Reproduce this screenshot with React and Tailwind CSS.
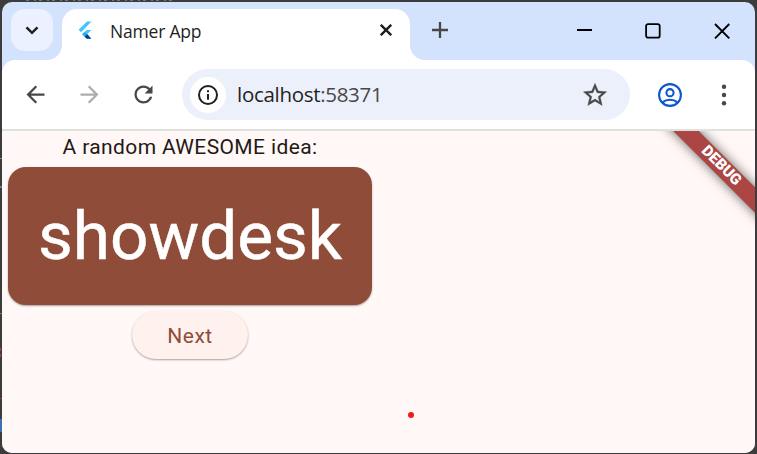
import React from "react";

const UI_FONT = "font-['Open_Sans','Noto_Sans',sans-serif]";

function ArrowIcon({ className }) {
  return (
    <svg viewBox="0 0 24 24" className={`h-[27px] w-[27px] shrink-0 ${className}`} fill="currentColor">
      <path d="M20 11H7.83l5.59-5.59L12 4l-8 8 8 8 1.41-1.41L7.83 13H20v-2z" />
    </svg>
  );
}

function FlutterLogo() {
  return (
    <svg viewBox="0 0 14 19" className="ml-[16px] h-[19px] w-[14px] shrink-0">
      <path d="M9 .5H13.5L3 11.2.6 8.8Z" fill="#41c4fb" />
      <path d="M8.7 9H13.2L9.3 13 13.2 17.8H8.8L4.2 13.3Z" fill="#41c4fb" />
      <path d="M6.5 15.4 9 13 13.3 17.8H8.9Z" fill="#063a94" />
      <path d="M4.3 13.3 6.6 11 9 13.2 6.6 15.5Z" fill="#1eaaf0" />
    </svg>
  );
}

function TabStrip() {
  return (
    <div className="flex h-[58px] shrink-0 items-start pl-[9px]">
      <div className="mt-[7px] flex h-[42px] w-[42px] shrink-0 items-center justify-center rounded-[14px] bg-[#ebf1fe]">
        <svg viewBox="0 0 14 9" className="h-[9px] w-[14px]" fill="none" stroke="#1f1f1f" strokeWidth="2.5">
          <path d="M1.5 1.3 7 6.8 12.5 1.3" />
        </svg>
      </div>
      <svg viewBox="0 0 15 15" className="-ml-[6px] h-[15px] w-[15px] shrink-0 self-end" fill="#fff">
        <path d="M15 0V15H0C8.3 15 15 8.3 15 0Z" />
      </svg>
      <div className="mt-[7px] flex h-[51px] w-[348px] shrink-0 items-start rounded-t-[15px] bg-white">
        <div className="flex h-[43px] w-full items-center">
          <FlutterLogo />
          <span className={`ml-[18px] whitespace-nowrap text-[17.5px] leading-[24px] tracking-[-0.2px] text-[#1f1f1f] ${UI_FONT}`}>Namer App</span>
          <svg viewBox="0 0 12 12" className="relative -top-px mr-[18px] ml-auto h-[12px] w-[12px]" stroke="#1f1f1f" strokeWidth="2.4">
            <path d="M.8.8 11.2 11.2M11.2.8.8 11.2" />
          </svg>
        </div>
      </div>
      <svg viewBox="0 0 15 15" className="h-[15px] w-[15px] shrink-0 self-end" fill="#fff">
        <path d="M0 0V15H15C6.7 15 0 8.3 0 0Z" />
      </svg>
      <svg viewBox="0 0 16 16" className="mt-[20px] ml-[7px] h-[16px] w-[16px] shrink-0" stroke="#474747" strokeWidth="2.3">
        <path d="M8 0V16M0 8H16" />
      </svg>
      <svg viewBox="0 0 15 2" className="mt-[27px] ml-[129px] h-[2px] w-[15px] shrink-0" fill="#000">
        <path d="M0 0H15V2H0Z" />
      </svg>
      <svg viewBox="0 0 16 16" className="mt-[21px] ml-[53px] h-[16px] w-[16px] shrink-0" fill="none" stroke="#000" strokeWidth="1.8">
        <rect x="1.1" y="1.1" width="13.6" height="13.6" rx="2" />
      </svg>
      <svg viewBox="0 0 16 16" className="mt-[21px] ml-[53px] h-[16px] w-[16px] shrink-0" stroke="#000" strokeWidth="1.9">
        <path d="M1 1 15.3 15.3M15.3 1 1 15.3" />
      </svg>
    </div>
  );
}

function Toolbar() {
  return (
    <div className="flex h-[71px] shrink-0 items-center rounded-t-[13px] border-b-2 border-[#dfe1df] bg-white pl-[19.5px]">
      <ArrowIcon className="text-[#474747]" />
      <ArrowIcon className="ml-[27px] rotate-180 text-[#adadad]" />
      <svg viewBox="0 0 24 24" className="ml-[27px] h-[27px] w-[27px] shrink-0" fill="#474747">
        <path d="M17.65 6.35C16.2 4.9 14.21 4 12 4c-4.42 0-7.99 3.58-7.99 8s3.57 8 7.99 8c3.73 0 6.84-2.55 7.73-6h-2.08c-.82 2.33-3.04 4-5.65 4-3.31 0-6-2.69-6-6s2.69-6 6-6c1.66 0 3.14.69 4.22 1.78L13 11h7V4l-2.35 2.35z" />
      </svg>
      <div className="ml-[25.5px] flex h-[51px] w-[448px] shrink-0 items-center rounded-full bg-[#ecf0fa] pr-[21px] pl-[8px]">
        <div className="flex h-[36px] w-[36px] items-center justify-center rounded-full bg-white">
          <svg viewBox="0 0 20 20" className="h-[20px] w-[20px]">
            <circle cx="10" cy="10" r="9" fill="none" stroke="#1f1f1f" strokeWidth="2" />
            <path d="M9 9H11V14.8H9ZM9 5.3H11V7.3H9Z" fill="#1f1f1f" />
          </svg>
        </div>
        <span className={`mb-[2px] ml-[11px] whitespace-nowrap text-[20.5px] leading-[28px] tracking-[-0.3px] text-[#1f1f1f] ${UI_FONT}`}>
          localhost<span className="text-[#474747]">:58371</span>
        </span>
        <svg viewBox="0 0 24 24" className="ml-auto h-[28px] w-[28px]" fill="#474747" stroke="#474747" strokeWidth="0.3">
          <path d="M22 9.24l-7.19-.62L12 2 9.19 8.63 2 9.24l5.46 4.73L5.82 21 12 17.27 18.18 21l-1.63-7.03L22 9.24zM12 15.4l-3.76 2.27 1-4.28-3.32-2.88 4.38-.38L12 6.1l1.71 4.04 4.38.38-3.32 2.88 1 4.28L12 15.4z" />
        </svg>
      </div>
      <svg viewBox="0 0 24 24" className="ml-[28px] h-[24px] w-[24px] shrink-0" fill="none" stroke="#0b57d0" strokeWidth="2.1">
        <circle cx="12" cy="12" r="10.9" />
        <circle cx="12" cy="9.7" r="3.6" />
        <path d="M4.5 19.4C8.6 15.9 15.4 15.9 19.5 19.4" />
      </svg>
      <svg viewBox="0 0 6 22" className="ml-[39px] h-[22px] w-[6px] shrink-0" fill="#474747">
        <circle cx="3" cy="2.8" r="2.2" />
        <circle cx="3" cy="11" r="2.2" />
        <circle cx="3" cy="19.2" r="2.2" />
      </svg>
    </div>
  );
}

function DebugBanner() {
  return (
    <div className="absolute top-[26px] left-[618.5px] flex h-[18px] w-[200px] rotate-45 items-center justify-center bg-[#ab4644] shadow-[0_0_12px_rgba(0,0,0,0.6)]">
      <span className="text-[15.3px] leading-none font-black text-white">DEBUG</span>
    </div>
  );
}

function NamerPage() {
  return (
    <div className="relative flex min-h-0 flex-1 flex-col items-start overflow-hidden bg-[#fff8f6] pl-[6px] font-[Roboto,sans-serif]">
      <div className="flex w-[364px] flex-col items-center">
        <p className="h-[30px] pt-px text-[21px] leading-[30px] tracking-[0.375px] whitespace-nowrap text-[#231917]">A random AWESOME idea:</p>
        <div className="mt-[6px] flex h-[138px] w-full items-center justify-center rounded-[18px] bg-[#8f4c38] shadow-[0_1px_2px_rgba(0,0,0,0.35)]">
          <span className="text-[67.5px] leading-[78px] text-white [-webkit-text-stroke:0.5px_white]">showdesk</span>
        </div>
        <button className="mt-[6px] flex h-[48px] w-[116px] items-center justify-center rounded-full bg-[#fff1ed] pt-[3px] text-[21px] tracking-[0.5px] text-[#8f4c38] shadow-[0_1px_2px_rgba(0,0,0,0.35)]">
          Next
        </button>
      </div>
      <div className="absolute top-[281px] left-[406px] h-[6px] w-[6px] rounded-full bg-[#ed1c1c]" />
      <DebugBanner />
    </div>
  );
}

export default function App() {
  return (
    <div className="relative h-[454px] w-[757px] overflow-hidden bg-[#3b3c3b] pt-[2px] pl-[2px]">
      <div className="absolute top-0 left-[26px] h-px w-[148px] bg-[repeating-linear-gradient(90deg,#6b7a80_0_3px,#3b3c3b_3px_8px,#80764f_8px_10px,#3b3c3b_10px_13px)]" />
      <div className="absolute top-[158px] left-0 h-px w-[2px] bg-[#72909e]" />
      <div className="absolute top-[186px] left-0 h-[2px] w-[2px] bg-[#65808c]" />
      <div className="absolute top-[313px] left-0 h-px w-[2px] bg-[#777]" />
      <div className="absolute top-[348px] left-0 h-[3px] w-px bg-[#b33d32]" />
      <div className="absolute top-[354px] left-0 h-[3px] w-px bg-[#b33d32]" />
      <div className="absolute top-[398px] left-0 h-px w-[2px] bg-[#9c4039]" />
      <div className="absolute top-[419px] left-0 h-[13px] w-[2px] bg-[#3d6fb5]" />
      <div className="relative flex h-[451px] w-[753px] flex-col overflow-hidden rounded-[10px] bg-[#d3e3fd]">
        <TabStrip />
        <Toolbar />
        <NamerPage />
      </div>
    </div>
  );
}
